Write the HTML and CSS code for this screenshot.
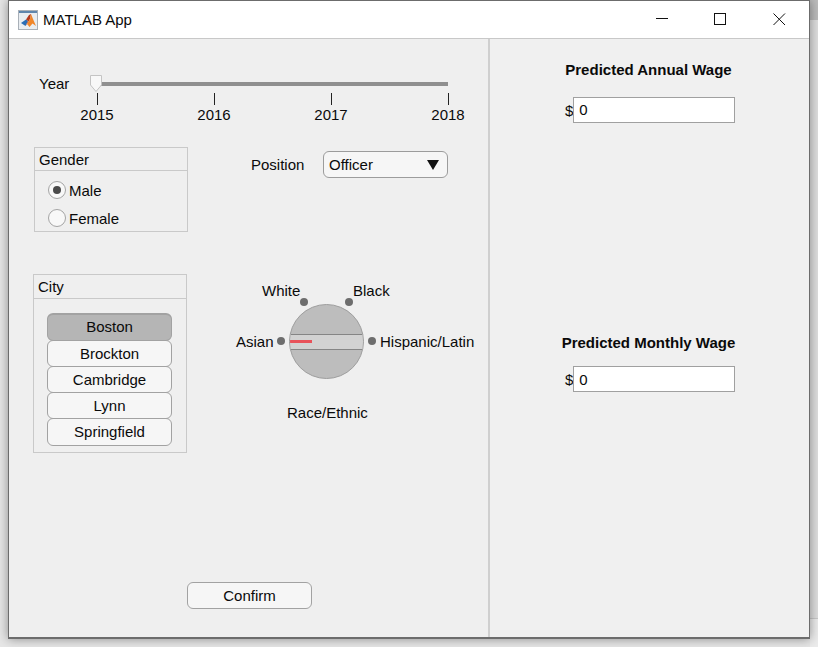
FILE: index.html
```html
<!DOCTYPE html>
<html>
	<head>
		<meta charset="utf-8">
		<title>MATLAB App</title>
		<link rel="stylesheet" href="styles.css">
	</head>
	<body>
		<div class="window">
			<div class="titlebar">
				<svg class="logo" width="20" height="20" viewBox="0 0 20 20">
					<rect x="0.5" y="0.5" width="19" height="19" fill="#e9edf1" stroke="#a9b0b8"/>
					<rect x="1" y="1" width="18" height="2" fill="#5f86ad"/>
					<path d="M3 13 L8 9.5 L10 11 L7.5 16 Z" fill="#2a6db5"/>
					<path d="M8 9.5 L11 5 L13 4 L12 9 L9 14 L7.5 16 L10 11 Z" fill="#b5381c"/>
					<path d="M13 4 L15 9 L18 16 L14.5 13.5 L11.5 17 L9 14 L12 9 Z" fill="#f0862a"/>
				</svg>
				<span class="title">MATLAB App</span>
				<div class="winbtns">
					<svg width="13" height="13" viewBox="0 0 13 13"><path d="M1 5.5 H13" stroke="#111" fill="none"/></svg>
					<svg width="13" height="13" viewBox="0 0 13 13"><rect x="0.5" y="0.5" width="11" height="11" stroke="#111" fill="none"/></svg>
					<svg width="13" height="13" viewBox="0 0 13 13"><path d="M0.5 0.5 L12 12 M12 0.5 L0.5 12" stroke="#111" fill="none"/></svg>
				</div>
			</div>
			<div class="content">
				<div class="left">
					<div class="year-row">
						<span class="year-label">Year</span>
						<div class="slider">
							<div class="track"></div>
							<svg class="thumb" width="14" height="19" viewBox="0 0 14 19">
								<path d="M1.5 1.5 H12.5 V11 L7 17.5 L1.5 11 Z" fill="#f8f8f8" stroke="#c4c4c4"/>
							</svg>
							<div class="ticks">
								<div class="tick"><i></i><span>2015</span></div>
								<div class="tick"><i></i><span>2016</span></div>
								<div class="tick"><i></i><span>2017</span></div>
								<div class="tick"><i></i><span>2018</span></div>
							</div>
						</div>
					</div>
					<div class="mid-row">
						<div class="panel gender">
							<div class="panel-title">Gender</div>
							<div class="radios">
								<div class="radio"><span class="dot on"></span>Male</div>
								<div class="radio"><span class="dot"></span>Female</div>
							</div>
						</div>
						<div class="position">
							<span class="position-label">Position</span>
							<div class="dropdown"><span>Officer</span><b class="arrow"></b></div>
						</div>
					</div>
					<div class="city-row">
						<div class="panel city">
							<div class="panel-title">City</div>
							<div class="toggles">
								<div class="toggle active">Boston</div>
								<div class="toggle">Brockton</div>
								<div class="toggle">Cambridge</div>
								<div class="toggle">Lynn</div>
								<div class="toggle">Springfield</div>
							</div>
						</div>
						<div class="knob-area">
							<span class="knob-label k-white">White</span>
							<span class="knob-label k-black">Black</span>
							<span class="knob-label k-asian">Asian</span>
							<span class="knob-label k-hisp">Hispanic/Latin</span>
							<i class="pip p-white"></i>
							<i class="pip p-black"></i>
							<i class="pip p-asian"></i>
							<i class="pip p-hisp"></i>
							<div class="knob">
								<div class="knob-bar"><div class="knob-mark"></div></div>
							</div>
							<span class="knob-label k-title">Race/Ethnic</span>
						</div>
					</div>
					<div class="confirm-row">
						<div class="button">Confirm</div>
					</div>
				</div>
				<div class="right">
					<div class="output annual">
						<div class="output-title">Predicted Annual Wage</div>
						<div class="field-row"><span>$</span><div class="field">0</div></div>
					</div>
					<div class="output monthly">
						<div class="output-title">Predicted Monthly Wage</div>
						<div class="field-row"><span>$</span><div class="field">0</div></div>
					</div>
				</div>
			</div>
		</div>
	</body>
</html>
```
FILE: styles.css
```css
*{
	margin: 0;
	padding: 0;
	box-sizing: border-box;
}
html, body{
	height: 647px;
	overflow: hidden;
}
body{
	background: #e6e6e6;
	font-family: "Liberation Sans", Arial, sans-serif;
	font-size: 15px;
	color: #0a0a0a;
	padding-left: 8px;
}
/* what shows of the desktop to the right of the window */
body::before{
	content: "";
	position: absolute;
	top: 0;
	right: 0;
	width: 8px;
	height: 647px;
	background: linear-gradient(to bottom, #bcbcbc 20px, #dedede 20px, #dedede 618px, #c8c8c8 618px, #c8c8c8 619px, #ebebeb 619px);
}
.window{
	position: relative;
	width: 802px;
	height: 639px;
	border: 1px solid #6c6c6c;
	border-bottom-width: 2px;
	background: #efefef;
	box-shadow: 0 0 10px rgba(0,0,0,0.4);
	display: flex;
	flex-direction: column;
}
.titlebar{
	height: 38px;
	flex: none;
	background: white;
	border-bottom: 1px solid #c8c8c8;
	display: flex;
	align-items: center;
	padding-left: 9px;
}
.logo{
	margin-right: 5px;
}
.title{
	font-size: 15px;
}
.winbtns{
	margin-left: auto;
	display: flex;
	gap: 46px;
	padding-right: 23px;
}
.content{
	flex: 1;
	display: flex;
}
.left{
	width: 481px;
	border-right: 2px solid #cfcfcf;
	display: flex;
	flex-direction: column;
}
.right{
	flex: 1;
	padding-right: 2px;
	background: #f0f0f0;
}

/* year slider */
.year-row{
	display: flex;
	padding: 36px 0 0 30px;
	height: 108px;
}
.year-label{
	width: 57px;
	line-height: 17px;
}
.slider{
	position: relative;
	width: 352px;
	padding-top: 7px;
}
.track{
	height: 4px;
	margin-left: 1px;
	background: #8f8f8f;
}
.thumb{
	position: absolute;
	left: -7px;
	top: -1px;
}
.ticks{
	display: flex;
	justify-content: space-between;
	margin: 7px -20px 0 -19px;
}
.tick{
	width: 40px;
	text-align: center;
}
.tick i{
	display: block;
	width: 1px;
	height: 12px;
	background: #222;
	margin: 0 auto 1px;
}

/* panels */
.panel{
	border: 1px solid #c9c9c9;
}
.panel-title{
	height: 23px;
	line-height: 24px;
	padding-left: 4px;
	border-bottom: 1px solid #c9c9c9;
}
.city .panel-title{
	height: 24px;
	line-height: 23px;
}
.mid-row{
	display: flex;
	padding-left: 25px;
	height: 127px;
}
.gender{
	width: 154px;
	height: 85px;
}
.radios{
	padding: 5px 0 0 13px;
}
.radio{
	display: flex;
	align-items: center;
	height: 28px;
}
.dot{
	width: 18px;
	height: 18px;
	border-radius: 50%;
	border: 1px solid #a4a4a4;
	background: #f8f8f8;
	margin-right: 3px;
	display: flex;
	align-items: center;
	justify-content: center;
}
.dot.on::after{
	content: "";
	width: 8px;
	height: 8px;
	border-radius: 50%;
	background: #4a4a4a;
}
.position{
	display: flex;
	align-items: center;
	height: 27px;
	margin: 4px 0 0 63px;
}
.position-label{
	width: 72px;
}
.dropdown{
	width: 125px;
	height: 27px;
	border: 1px solid #9c9c9c;
	border-radius: 6px;
	background: #f6f6f6;
	padding: 0 8px 0 5px;
	display: flex;
	align-items: center;
	justify-content: space-between;
}
.arrow{
	width: 0;
	height: 0;
	border-left: 6px solid transparent;
	border-right: 6px solid transparent;
	border-top: 10px solid #111;
}

/* city */
.city-row{
	display: flex;
	padding-left: 24px;
	height: 308px;
}
.city{
	width: 154px;
	height: 179px;
}
.toggles{
	padding: 14px 14px 0 13px;
}
.toggle{
	height: 27px;
	margin-bottom: -1px;
	line-height: 26px;
	text-align: center;
	border: 1px solid #a2a2a2;
	border-radius: 6px;
	background: #f6f6f6;
}
.toggle.active{
	height: 28px;
	background: #b5b5b5;
	border-top-width: 2px;
	line-height: 23px;
}
.toggle:last-child{
	height: 28px;
}

/* knob, labels sit on their tick marks */
.knob-area{
	position: relative;
	flex: 1;
}
.knob{
	position: absolute;
	left: 102px;
	top: 30px;
	width: 75px;
	height: 75px;
	border-radius: 50%;
	border: 1px solid #9e9e9e;
	background: #bdbdbd;
	overflow: hidden;
}
.knob-bar{
	margin-top: 29px;
	height: 16px;
	background: #d2d2d2;
	border-top: 1px solid #858585;
	border-bottom: 1px solid #858585;
}
.knob-mark{
	width: 22px;
	height: 3px;
	margin-top: 5px;
	background: #e8525a;
}
.pip{
	position: absolute;
	width: 8px;
	height: 8px;
	border-radius: 50%;
	background: #6d6d6d;
}
.p-white{ left: 113px; top: 24px; }
.p-black{ left: 158px; top: 24px; }
.p-asian{ left: 90px; top: 63px; }
.p-hisp{ left: 181px; top: 63px; }
.knob-label{
	position: absolute;
	line-height: 17px;
	white-space: nowrap;
}
.k-white{ left: 75px; top: 8px; }
.k-black{ left: 166px; top: 8px; }
.k-asian{ left: 49px; top: 59px; }
.k-hisp{ left: 193px; top: 59px; }
.k-title{ left: 100px; top: 130px; }

.confirm-row{
	padding-left: 178px;
}
.button{
	width: 125px;
	height: 27px;
	line-height: 26px;
	text-align: center;
	border: 1px solid #a2a2a2;
	border-radius: 6px;
	background: #f6f6f6;
}

/* right side */
.output-title{
	font-weight: bold;
	font-size: 15px;
	text-align: center;
	line-height: 17px;
}
.annual{
	padding-top: 22px;
	height: 295px;
}
.field-row{
	display: flex;
	align-items: center;
	margin: 19px 0 0 75px;
}
.monthly .field-row{
	margin-top: 15px;
}
.field{
	width: 162px;
	height: 26px;
	line-height: 25px;
	padding-left: 5px;
	background: white;
	border: 1px solid #a0a0a0;
}
.annual .field{
	line-height: 23px;
}
```
